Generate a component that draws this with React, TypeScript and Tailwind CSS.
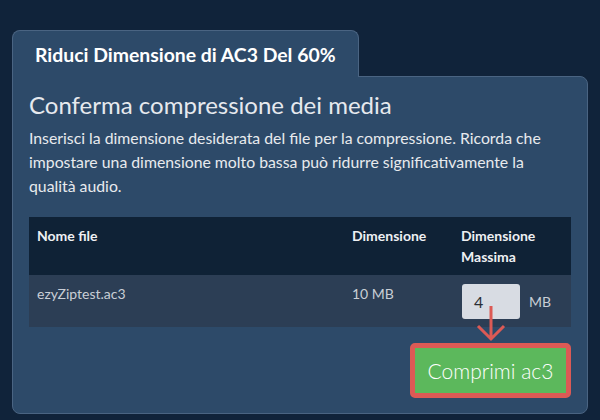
import React from "react";

const App = () => {
  return (
    <div
      className="w-[600px] h-[420px] bg-[#10233a] pt-[30px] px-3 overflow-hidden"
      style={{ fontFamily: "Lato, 'Open Sans', sans-serif" }}
    >
      {/* Tab */}
      <div className="relative z-10 -mb-px w-[347px] rounded-t-lg border-l border-t border-r border-[#4a6482] bg-[#2d4a69] pl-[22px] pr-2 pt-3 pb-[10px]">
        <h1 className="whitespace-nowrap text-[19.4px] leading-[24px] font-bold text-white">
          Riduci Dimensione di AC3 Del 60%
        </h1>
      </div>

      {/* Panel */}
      <div className="relative rounded-b-lg rounded-tr-lg border border-[#4a6482] bg-[#2d4a69] px-4 pt-[13px] pb-[15px]">
        <h2 className="text-[24px] leading-[29px] text-[#e6e9ee]">
          Conferma compressione dei media
        </h2>
        <p className="mt-[7px] text-[15.8px] leading-[24px] text-[#e8eaee]">
          Inserisci la dimensione desiderata del file per la compressione. Ricorda che
          impostare una dimensione molto bassa può ridurre significativamente la
          qualità audio.
        </p>

        <table className="mt-[19px] w-full border-collapse text-[14px] leading-[21px]">
          <thead>
            <tr className="bg-[#0f2236] text-left text-[#eef0f3]">
              <th className="p-2 align-top font-bold w-[315px]">Nome file</th>
              <th className="p-2 align-top font-bold w-[109px]">Dimensione</th>
              <th className="p-2 align-top font-bold">
                Dimensione
                <br />
                Massima
              </th>
            </tr>
          </thead>
          <tbody>
            <tr className="bg-[#2c3e55] text-[#c9ced6]">
              <td className="p-2 align-top">ezyZiptest.ac3</td>
              <td className="p-2 align-top">10 MB</td>
              <td className="p-2 align-top">
                <div className="relative flex items-center gap-[9px] pl-px pt-px">
                  <div className="h-[35px] w-[58px] rounded-[3px] bg-[#d8dce3] pl-3 text-[16px] leading-[35px] text-[#2a2f36]">
                    4
                  </div>
                  <span>MB</span>
                  <svg
                    className="absolute left-[0px] top-[22px]"
                    width="60"
                    height="40"
                    viewBox="0 0 60 40"
                  >
                    <path
                      d="M30 1 V34 M17 21 L30 34 L43 21"
                      fill="none"
                      stroke="#dc5a55"
                      strokeWidth="3"
                    />
                  </svg>
                </div>
              </td>
            </tr>
          </tbody>
        </table>

        <div className="mt-4 flex justify-end">
          <button className="h-[55px] w-[161px] rounded-[5px] border-[5px] border-[#dc5a55] bg-[#5cb85c] text-[21px] font-light text-white">
            Comprimi ac3
          </button>
        </div>
      </div>
    </div>
  );
};

export default App;
